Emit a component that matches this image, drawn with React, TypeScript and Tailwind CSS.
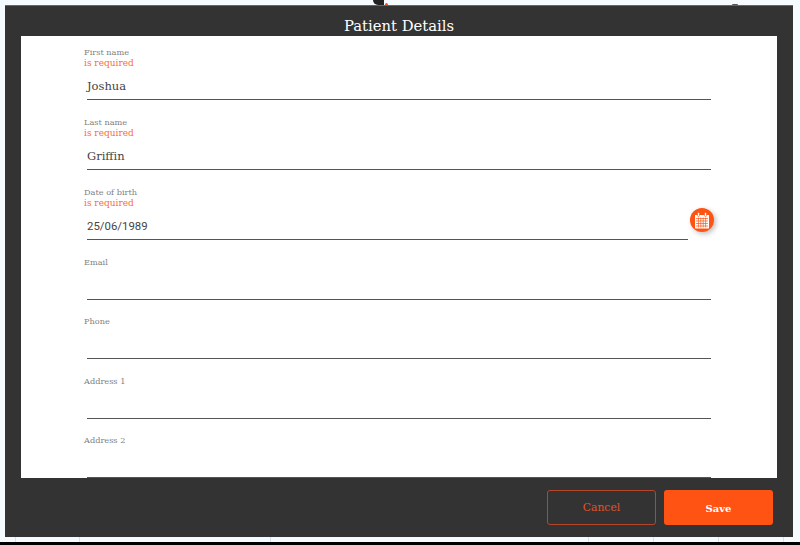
import React from 'react';

const font = "font-['DejaVu_Serif',serif]";

const fields = [
  { label: 'First name', required: true, value: 'Joshua' },
  { label: 'Last name', required: true, value: 'Griffin' },
  { label: 'Date of birth', required: true, value: '25/06/1989', date: true },
  { label: 'Email' },
  { label: 'Phone' },
  { label: 'Address 1' },
  { label: 'Address 2' },
];

const CalendarIcon = () => (
  <svg width="16" height="17" viewBox="0 0 16 17" fill="none">
    <path d="M1 3h14v13.5H1z" fill="#fff" />
    <rect x="3.5" y="0.5" width="2" height="4" rx="1" fill="#fff" stroke="#ff5314" strokeWidth="0.6" />
    <rect x="10.5" y="0.5" width="2" height="4" rx="1" fill="#fff" stroke="#ff5314" strokeWidth="0.6" />
    <path
      d="M2 6.5h12M2 9h12M2 11.5h12M2 14h12M4.4 5.5v10M6.8 5.5v10M9.2 5.5v10M11.6 5.5v10"
      stroke="#ff5314"
      strokeWidth="0.7"
    />
  </svg>
);

type FieldProps = { label: string; required?: boolean; value?: string; date?: boolean };

const Field = ({ label, required, value, date }: FieldProps) => (
  <div className={`relative ${required ? 'h-[70px]' : 'h-[59.4px]'}`}>
    <div className="pb-[2px] text-[8.2px] leading-[8px] text-[#808080]">{label}</div>
    {required && <div className="text-[9px] leading-[10px] text-[#ff6a3c]">is required</div>}
    <div
      className={`ml-[3px] h-[32px] border-b border-[#555] pt-[10px] leading-[16px] text-[#444] ${
        date ? "w-[601px] font-['Roboto',sans-serif] text-[11.4px]" : 'w-[624px] text-[11.5px]'
      }`}
    >
      {value}
    </div>
    {date && (
      <div className="absolute left-[606px] top-[20px] flex h-[24px] w-[24px] items-center justify-center rounded-full bg-[#ff5314] shadow-[2px_2px_5px_rgba(0,0,0,0.25)]">
        <CalendarIcon />
      </div>
    )}
  </div>
);

export default function App() {
  return (
    <div className={`flex h-[545px] w-[800px] flex-col overflow-hidden bg-[#f6fbff] ${font}`}>
      {/* bits of the page behind the modal */}
      <div className="flex h-[5px] shrink-0 items-end">
        <div className="ml-[373px] h-[5px] w-[11px] rounded-bl-full bg-[#222]" />
        <div className="ml-[1px] h-[2px] w-[3px] rounded-t-full bg-[#ff5314]" />
        <div className="ml-[344px] h-[1px] w-[6px] rounded-t-full bg-[#555]" />
      </div>

      <div className="flex h-[532px] shrink-0 pl-[5px]">
        <div className="flex h-[532px] w-[788px] flex-col border-t border-[#666] bg-[#333]">
          <div className="flex h-[30px] items-end justify-center text-[14.8px] leading-[20px] text-white">
            Patient Details
          </div>
          <div className="mx-[16px] h-[442px] overflow-hidden bg-white pl-[63px] pt-[12px]">
            {fields.map((f) => (
              <Field key={f.label} {...f} />
            ))}
          </div>
          <div className="flex flex-1 items-start justify-end gap-[8px] pr-[20px] pt-[12px]">
            <button className="h-[35px] w-[109px] rounded-[3px] border border-[#b5462a] pt-[1px] text-[10.8px] text-[#e0532a]">
              Cancel
            </button>
            <button className="h-[35px] w-[109px] rounded-[3px] bg-[#ff5314] pt-[1px] text-[10px] font-bold text-white">
              Save
            </button>
          </div>
        </div>
      </div>

      <div className="flex h-[5px] shrink-0">
        <div className="w-[15px]" />
        <div className="w-[64px] border-l border-[#d8e2ee]" />
        <div className="w-[191px] border-l border-[#d8e2ee]" />
        <div className="w-[318px] border-l border-[#d8e2ee]" />
        <div className="w-[65px] border-l border-[#d8e2ee]" />
        <div className="w-[65px] border-l border-[#d8e2ee]" />
        <div className="w-[65px] border-l border-[#d8e2ee]" />
        <div className="flex-1 border-l border-[#d8e2ee]" />
      </div>
      <div className="flex-1 bg-black" />
    </div>
  );
}
